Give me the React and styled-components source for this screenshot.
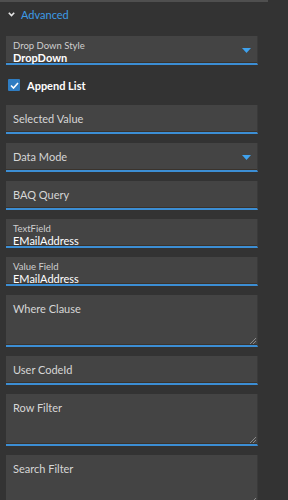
import React from "react";
import styled, { createGlobalStyle } from "styled-components";

const GlobalStyle = createGlobalStyle`
  html, body {
    margin: 0;
    padding: 0;
    background: #333333;
    overflow: hidden;
  }
  body {
    font-family: Lato, "Noto Sans", sans-serif;
  }
`;

const Panel = styled.div`
  width: 288px;
  height: 500px;
  background: #333333;
  overflow: hidden;
`;

const TopBar = styled.div`
  width: 268px;
  height: 2px;
  background: #4f4f4f;
`;

const SectionHeader = styled.div`
  display: flex;
  align-items: center;
  gap: 6px;
  height: 25px;
  padding-left: 8px;
  color: #3d9be6;
  font-size: 11px;
`;

const Fields = styled.div`
  display: flex;
  flex-direction: column;
  gap: 9px;
  padding: 9px 0 0 6px;
`;

const Field = styled.div`
  position: relative;
  box-sizing: border-box;
  flex-shrink: 0;
  width: 252px;
  height: ${(p) => (p.$tall ? 52 : 29)}px;
  background: #444444;
  border-right: 1px solid #3a3a3a;
  border-bottom: 2px solid #3c8ed4;
  box-shadow: inset 0 -1px 0 #3a332c;
  display: flex;
  flex-direction: column;
  justify-content: ${(p) => (p.$center ? "center" : "flex-start")};
  padding: ${(p) => (p.$tall ? "7px" : p.$center ? "0" : "4px")} 7px 0 7px;
`;

const Placeholder = styled.div`
  color: #d6d6d6;
  font-size: 11px;
  line-height: 14px;
`;

const SmallLabel = styled.div`
  color: #cfcfcf;
  font-size: 9.5px;
  line-height: 11px;
`;

const Value = styled.div`
  color: #ffffff;
  font-size: 11px;
  line-height: 13px;
  font-weight: ${(p) => (p.$bold ? 700 : 400)};
`;

const Arrow = styled.svg`
  position: absolute;
  right: 6px;
  top: 50%;
  margin-top: -2px;
`;

const Resize = styled.svg`
  position: absolute;
  right: 1px;
  bottom: 1px;
`;

const CheckRow = styled.label`
  display: flex;
  align-items: center;
  gap: 7px;
  height: 40px;
  flex-shrink: 0;
  padding-left: 2px;
  margin-top: -9px;
  margin-bottom: -9px;
  color: #ffffff;
  font-size: 11px;
  font-weight: 700;
`;

const Box = styled.span`
  width: 12px;
  height: 12px;
  border-radius: 1px;
  background: #2f7dc2;
  display: flex;
  align-items: center;
  justify-content: center;
`;

function DropArrow() {
  return (
    <Arrow width="9" height="5" viewBox="0 0 9 5">
      <path d="M0 0 H9 L4.5 5 Z" fill="#3fa2ee" />
    </Arrow>
  );
}

function ResizeHandle() {
  return (
    <Resize width="7" height="7" viewBox="0 0 7 7">
      <path d="M1 7 L7 1 M4 7 L7 4" stroke="#8a8a8a" strokeWidth="1" />
    </Resize>
  );
}

function TextField({ label, value, tall, dropdown }) {
  if (value) {
    return (
      <Field>
        <SmallLabel>{label}</SmallLabel>
        <Value $bold={dropdown}>{value}</Value>
        {dropdown && <DropArrow />}
      </Field>
    );
  }
  return (
    <Field $tall={tall} $center={!tall}>
      <Placeholder>{label}</Placeholder>
      {dropdown && <DropArrow />}
      {tall && <ResizeHandle />}
    </Field>
  );
}

export default function App() {
  return (
    <Panel>
      <GlobalStyle />
      <TopBar />
      <SectionHeader>
        <svg width="7" height="5" viewBox="0 0 7 5">
          <path d="M0.8 0.8 L3.5 3.6 L6.2 0.8" stroke="#e6e6e6" strokeWidth="1.6" fill="none" />
        </svg>
        Advanced
      </SectionHeader>
      <Fields>
        <TextField label="Drop Down Style" value="DropDown" dropdown />
        <CheckRow>
          <Box>
            <svg width="9" height="7" viewBox="0 0 9 7">
              <path d="M1 3.5 L3.5 6 L8 1" stroke="#ffffff" strokeWidth="1.6" fill="none" />
            </svg>
          </Box>
          Append List
        </CheckRow>
        <TextField label="Selected Value" />
        <TextField label="Data Mode" dropdown />
        <TextField label="BAQ Query" />
        <TextField label="TextField" value="EMailAddress" />
        <TextField label="Value Field" value="EMailAddress" />
        <TextField label="Where Clause" tall />
        <TextField label="User CodeId" />
        <TextField label="Row Filter" tall />
        <TextField label="Search Filter" tall />
      </Fields>
    </Panel>
  );
}
